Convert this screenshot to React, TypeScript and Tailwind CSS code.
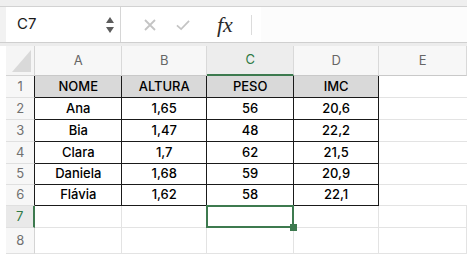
const cols = ["A", "B", "C", "D", "E"];

// full class strings so tailwind picks them up
const colWidth = ["w-[89px]", "w-[87px]", "w-[89px]", "w-[87px]", "w-[90px]"];
const rowHeight = [
  "h-[22px]",
  "h-[22px]",
  "h-[22px]",
  "h-[22px]",
  "h-[21px]",
  "h-[21px]",
  "h-[22px]",
  "h-[26px]",
];

const data = [
  ["NOME", "ALTURA", "PESO", "IMC"],
  ["Ana", "1,65", "56", "20,6"],
  ["Bia", "1,47", "48", "22,2"],
  ["Clara", "1,7", "62", "21,5"],
  ["Daniela", "1,68", "59", "20,9"],
  ["Flávia", "1,62", "58", "22,1"],
  ["", "", "", ""],
  ["", "", "", ""],
];

function FormulaBar() {
  return (
    <div className="flex h-[35px] bg-[#f2f2f2]">
      {/* Name box */}
      <div className="ml-[6px] flex w-[115px] items-center justify-between border-r border-[#d6d6d6] bg-white pl-[11px] pr-[6px]">
        <span className="text-[15px] text-[#1a1a1a]">C7</span>
        <div className="flex flex-col items-center gap-[4px]">
          <svg width="8" height="6" viewBox="0 0 8 6">
            <path d="M4 0 L8 6 L0 6 Z" fill="#5c5c5c" />
          </svg>
          <svg width="8" height="6" viewBox="0 0 8 6">
            <path d="M0 0 L8 0 L4 6 Z" fill="#5c5c5c" />
          </svg>
        </div>
      </div>

      {/* Cancel / enter / fx */}
      <div className="flex flex-1 items-center bg-white">
        <div className="ml-[23px] flex w-[12px] items-center justify-center">
          <svg width="12" height="12" viewBox="0 0 12 12">
            <path d="M1 1 L11 11 M11 1 L1 11" stroke="#c4c4c4" strokeWidth="1.8" />
          </svg>
        </div>
        <div className="ml-[20px] flex w-[14px] items-center justify-center">
          <svg width="15" height="12" viewBox="0 0 15 12">
            <path d="M1 6.5 L5.5 10.5 L14 1.5" stroke="#c4c4c4" strokeWidth="1.8" fill="none" />
          </svg>
        </div>
        <span
          className="ml-[27px] text-[22px] italic leading-none text-[#2a2a2a]"
          style={{ fontFamily: '"Liberation Serif", "DejaVu Serif", serif' }}
        >
          fx
        </span>
        <div className="ml-[18px] h-[20px] w-px bg-[#dcdcdc]" />
        <div className="ml-[9px] h-full flex-1 bg-[#fcfcfc]" />
      </div>
    </div>
  );
}

function HeaderRow() {
  return (
    <div className="flex h-[30px]">
      <div className="relative w-[30px] border-r border-b border-[#d4d4d4] bg-[#f5f5f5]">
        <svg className="absolute bottom-[3px] right-[3px]" width="19" height="22" viewBox="0 0 19 22">
          <path d="M19 0 L19 22 L0 22 Z" fill="#d9d9d9" />
        </svg>
      </div>
      {cols.map((c, i) => (
        <div
          key={c}
          className={`${colWidth[i]} flex items-center justify-center border-r border-[#d9d9d9] text-[13px] ${
            c === "C"
              ? "border-b-2 border-b-[#3d7a4f] bg-[#ededed] text-[#2f7a45]"
              : "border-b border-b-[#c9c9c9] bg-[#f7f7f7] text-[#666]"
          }`}
        >
          {c}
        </div>
      ))}
    </div>
  );
}

function SheetRow({ r }: { r: number }) {
  const inTable = r < 6;
  const selected = r === 6;
  return (
    <div className={`flex ${rowHeight[r]}`}>
      <div
        className={`flex w-[30px] items-center justify-center border-b border-[#e0e0e0] text-[13px] ${
          selected
            ? "border-r-2 border-r-[#3d7a4f] bg-[#e9e9e9] text-[#2f7a45]"
            : inTable
              ? "border-r border-r-[#1a1a1a] bg-[#f7f7f7] text-[#707070]"
              : "border-r border-r-[#d4d4d4] bg-[#f7f7f7] text-[#707070]"
        }`}
      >
        {r + 1}
      </div>
      {cols.map((c, i) => {
        const tableCell = inTable && i < 4;
        const belowTable = r === 6 && i < 4;
        return (
          <div
            key={c}
            className={`${colWidth[i]} relative flex items-center justify-center text-[13px] font-medium text-black ${
              tableCell
                ? "border-r border-b border-[#1a1a1a]"
                : i === 4 && inTable
                  ? "border-b border-[#e3e3e3]"
                  : "border-r border-b border-[#e3e3e3]"
            } ${r === 0 && i < 4 ? "bg-[#d9d9d9]" : "bg-white"} ${belowTable && i === 3 ? "border-r-[#e3e3e3]" : ""}`}
          >
            {i < 4 ? data[r][i] : ""}
            {selected && c === "C" && (
              <>
                <div className="absolute -top-[1px] -left-[1px] -right-[1px] -bottom-[1px] z-10 border-2 border-[#3d7a4f]" />
                <div className="absolute -bottom-[4px] -right-[4px] z-20 h-[7px] w-[7px] bg-[#3d7a4f]" />
              </>
            )}
          </div>
        );
      })}
    </div>
  );
}

export default function App() {
  return (
    <div
      className="h-[255px] w-[467px] overflow-hidden bg-white"
      style={{ fontFamily: 'Inter, "Liberation Sans", sans-serif' }}
    >
      <div className="h-[7px] border-b border-[#d2d2d2] bg-[#efefef]" />
      <FormulaBar />
      <div className="h-[4px] border-t border-[#cfcfcf] bg-[#ececec]" />
      <div className="pl-[6px]">
        <HeaderRow />
        {rowHeight.map((_, r) => (
          <SheetRow key={r} r={r} />
        ))}
      </div>
    </div>
  );
}
